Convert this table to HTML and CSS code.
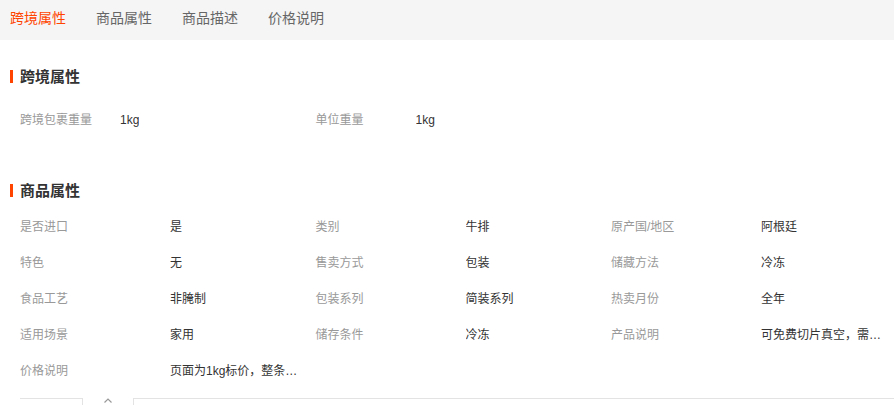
FILE: index.html
```html
<!DOCTYPE html>
<html lang="zh-CN">
<head>
    <meta charset="UTF-8">
    <title>商品详情</title>
    <link rel="stylesheet" href="styles.css">
</head>
<body>
    <div class="tabs">
        <span class="tab active">跨境属性</span>
        <span class="tab">商品属性</span>
        <span class="tab">商品描述</span>
        <span class="tab">价格说明</span>
    </div>

    <div class="section">
        <h3 class="section-title">跨境属性</h3>
        <div class="attrs attrs-short">
            <div class="attr"><span class="label">跨境包裹重量</span><span class="value">1kg</span></div>
            <div class="attr"><span class="label">单位重量</span><span class="value">1kg</span></div>
        </div>
    </div>

    <div class="section section-goods">
        <h3 class="section-title">商品属性</h3>
        <div class="attrs">
            <div class="attr"><span class="label">是否进口</span><span class="value">是</span></div>
            <div class="attr"><span class="label">类别</span><span class="value">牛排</span></div>
            <div class="attr"><span class="label">原产国/地区</span><span class="value">阿根廷</span></div>
            <div class="attr"><span class="label">特色</span><span class="value">无</span></div>
            <div class="attr"><span class="label">售卖方式</span><span class="value">包装</span></div>
            <div class="attr"><span class="label">储藏方法</span><span class="value">冷冻</span></div>
            <div class="attr"><span class="label">食品工艺</span><span class="value">非腌制</span></div>
            <div class="attr"><span class="label">包装系列</span><span class="value">简装系列</span></div>
            <div class="attr"><span class="label">热卖月份</span><span class="value">全年</span></div>
            <div class="attr"><span class="label">适用场景</span><span class="value">家用</span></div>
            <div class="attr"><span class="label">储存条件</span><span class="value">冷冻</span></div>
            <div class="attr"><span class="label">产品说明</span><span class="value">可免费切片真空，需要请备注</span></div>
            <div class="attr"><span class="label">价格说明</span><span class="value value-wide">页面为1kg标价，整条发货按实际重量</span></div>
        </div>
    </div>

    <div class="more">
        <div class="more-left"></div>
        <span class="more-caret">
            <svg width="8" height="5" viewBox="0 0 8 5"><path d="M0.5 4.5 L4 1 L7.5 4.5" fill="none" stroke="#999" stroke-width="1.2"/></svg>
        </span>
        <div class="more-right"></div>
    </div>
</body>
</html>
```

FILE: styles.css
```css
body {
    margin: 0;
    font-family: "Liberation Sans", "Noto Sans CJK SC", sans-serif;
    background-color: #fff;
    color: #333;
}
.tabs {
    display: flex;
    gap: 30px;
    height: 40px;
    padding-left: 10px;
    background-color: #f5f5f5;
}
.tab {
    font-size: 14px;
    line-height: 36px;
    color: #666;
}
.tab.active {
    color: #ff4400;
}
.section {
    padding: 0 0 0 10px;
}
.section-title {
    margin: 27px 0 0;
    font-size: 15px;
    line-height: 20px;
    font-weight: bold;
    color: #333;
}
.section-title::before {
    content: "";
    display: inline-block;
    width: 3px;
    height: 13px;
    margin-right: 7px;
    vertical-align: -1px;
    background-color: #ff4400;
}
.attrs {
    display: grid;
    grid-template-columns: repeat(3, 295.5px);
    margin-top: 8px;
    padding-left: 10px;
}
.attrs-short {
    margin-top: 15px;
}
.attr {
    display: flex;
    height: 36px;
    line-height: 36px;
    font-size: 12px;
}
.label {
    flex: none;
    width: 150px;
    color: #999;
}
.attrs-short .label {
    width: 100px;
}
.value {
    max-width: 126px;
    overflow: hidden;
    white-space: nowrap;
    text-overflow: ellipsis;
    color: #333;
}
.value-wide {
    max-width: 134px;
}
.section-goods .section-title {
    margin-top: 43px;
}
.more {
    display: flex;
    margin: 9px 0 0 20px;
    height: 20px;
}
.more-left {
    width: 62px;
    border-top: 1px solid #e3e3e3;
    border-right: 1px solid #e3e3e3;
}
.more-caret {
    width: 50px;
}
.more-caret svg {
    display: block;
    margin: 0 auto;
}
.more-right {
    flex: 1;
    border-top: 1px solid #e3e3e3;
    border-left: 1px solid #e3e3e3;
}
```
